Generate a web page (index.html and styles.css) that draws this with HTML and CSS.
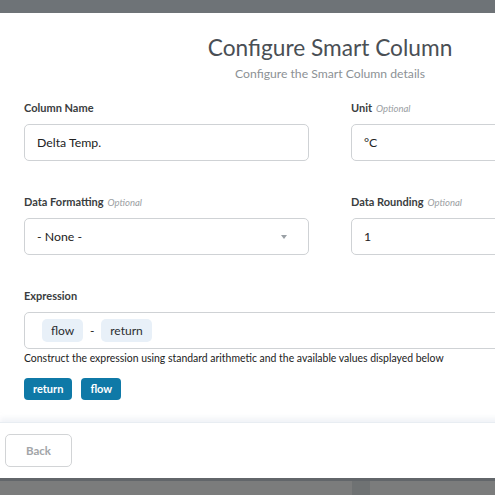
FILE: index.html
```html
<!DOCTYPE html>
<html>
<head>
<meta charset="utf-8">
<link rel="stylesheet" href="styles.css">
</head>
<body>
<div class="topbar"></div>
<div class="modal">
  <div class="header">
    <h1 class="title">Configure Smart Column</h1>
    <div class="subtitle">Configure the Smart Column details</div>
  </div>
  <div class="body">
    <div class="grid">
      <div class="field">
        <div class="label">Column Name</div>
        <div class="input">Delta Temp.</div>
      </div>
      <div class="field">
        <div class="label">Unit <span class="opt">Optional</span></div>
        <div class="input">°C</div>
      </div>
      <div class="field">
        <div class="label">Data Formatting <span class="opt">Optional</span></div>
        <div class="input select"><span>- None -</span><span class="caret"></span></div>
      </div>
      <div class="field">
        <div class="label">Data Rounding <span class="opt">Optional</span></div>
        <div class="input">1</div>
      </div>
    </div>
    <div class="field expr-field">
      <div class="label">Expression</div>
      <div class="input expr">
        <span class="chip">flow</span>
        <span class="op">-</span>
        <span class="chip">return</span>
      </div>
      <div class="help">Construct the expression using standard arithmetic and the available values displayed below</div>
      <div class="values">
        <span class="value">return</span>
        <span class="value">flow</span>
      </div>
    </div>
  </div>
  <div class="footer">
    <div class="back">Back</div>
  </div>
</div>
<div class="bottombar"><div class="bb-block"></div></div>
</body>
</html>
```
FILE: styles.css
```css
html, body {
  margin: 0;
  padding: 0;
}
body {
  width: 495px;
  height: 495px;
  overflow: hidden;
  background: #7a7c7c;
  font-family: Lato, "Noto Sans", sans-serif;
  color: #333;
}
.topbar {
  height: 13px;
  background: #6e7377;
}
.modal {
  width: 660px;
  height: 465px;
  background: #fff;
  display: flex;
  flex-direction: column;
}
.header {
  padding-top: 22px;
  text-align: center;
}
.title {
  margin: 0;
  font-size: 22.7px;
  line-height: 26px;
  font-weight: 400;
  color: #4a4f55;
}
.subtitle {
  margin-top: 6px;
  font-size: 12.2px;
  line-height: 14px;
  color: #8c9195;
}
.body {
  padding: 20px 24px 0 24px;
  height: 341px;
  flex: none;
  box-sizing: border-box;
}
.grid {
  display: grid;
  grid-template-columns: 285px 285px;
  column-gap: 42px;
  row-gap: 34px;
}
.field {
  display: flex;
  flex-direction: column;
}
.label {
  height: 14px;
  display: flex;
  align-items: baseline;
  gap: 4px;
  font-size: 11px;
  line-height: 14px;
  font-weight: 700;
  color: #3a3d40;
  margin-bottom: 9px;
}
.opt {
  font-size: 9.5px;
  line-height: 14px;
  font-weight: 400;
  font-style: italic;
  color: #9a9ea2;
}
.input {
  height: 37px;
  box-sizing: border-box;
  border: 1px solid #cfd2d5;
  border-radius: 5px;
  padding: 0 12px;
  display: flex;
  align-items: center;
  font-size: 12.3px;
  color: #222;
}
.select {
  justify-content: space-between;
  padding-right: 21px;
}
.caret {
  width: 0;
  height: 0;
  border-left: 3.5px solid transparent;
  border-right: 3.5px solid transparent;
  border-top: 4px solid #9aa0a5;
}
.expr-field {
  margin-top: 34px;
}
.expr {
  width: 500px;
  padding-left: 17px;
}
.chip {
  background: #e8f0f8;
  border-radius: 5px;
  height: 23px;
  line-height: 23px;
  padding: 0 9px;
  font-size: 12px;
  color: #2a2d30;
}
.op {
  width: 18px;
  text-align: center;
  font-size: 12px;
}
.help {
  margin-top: 3px;
  font-size: 10.45px;
  line-height: 13px;
  color: #222;
}
.values {
  margin-top: 13px;
  display: flex;
  gap: 9px;
}
.value {
  height: 22px;
  line-height: 22px;
  padding: 0 9px;
  border-radius: 4px;
  background: #0f79a7;
  color: #fff;
  font-size: 11px;
  font-weight: 700;
}
.footer {
  flex: 1;
  border-top: 1px solid #e8edf2;
  box-shadow: 0 -4px 5px rgba(215, 222, 232, 0.35);
  padding: 11px 0 0 5px;
}
.back {
  width: 67px;
  height: 33px;
  box-sizing: border-box;
  border: 1px solid #d2d4d6;
  border-radius: 5px;
  display: flex;
  align-items: center;
  justify-content: center;
  font-size: 11.5px;
  font-weight: 700;
  color: #a2a5a8;
}
.bottombar {
  height: 17px;
  box-sizing: border-box;
  border-top: 3px solid #62666a;
  background: #7b7c7c;
  position: relative;
}
.bb-block {
  position: absolute;
  left: 352px;
  top: 0;
  width: 18px;
  height: 14px;
  background: #6f7273;
}
```
